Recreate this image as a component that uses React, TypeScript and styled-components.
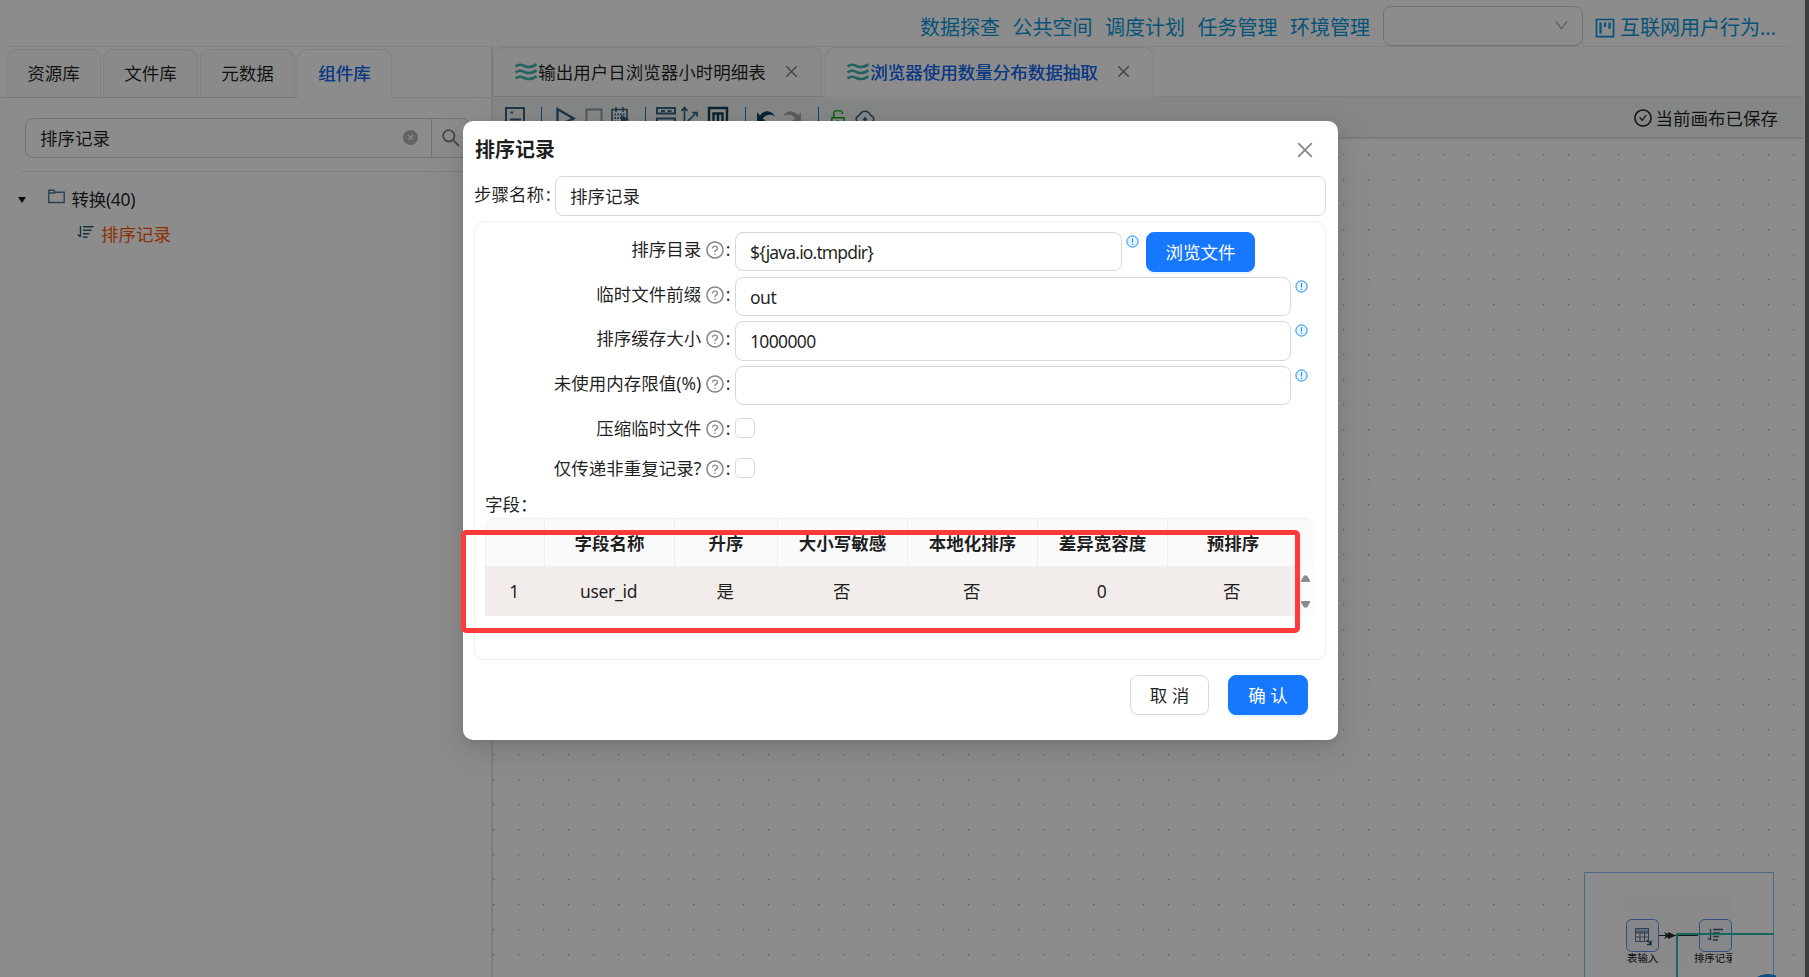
import React from "react";
import styled, { createGlobalStyle, css } from "styled-components";
import {
  AiFillCloseCircle,
  AiOutlineCheckCircle,
  AiOutlineClose,
  AiOutlineCloudUpload,
  AiOutlineDown,
  AiOutlineProject,
  AiOutlineQuestionCircle,
  AiOutlineSearch,
  AiOutlineUnlock,
} from "react-icons/ai";

const GlobalStyle = createGlobalStyle`
  *, *::before, *::after { box-sizing: border-box; }
  body {
    margin: 0;
    overflow: hidden;
    background: #3c3c3c;
    color: rgba(0, 0, 0, 0.88);
    font-family: "Noto Sans", "Noto Sans CJK SC", sans-serif;
    font-size: 17.5px;
    line-height: 26px;
  }
  svg { display: block; flex: none; }
`;

const Window = styled.div`
  position: relative;
  width: 1805px;
  height: 977px;
  overflow: hidden;
  background: #fff;
  display: flex;
  flex-direction: column;
`;

/* ---------- header ---------- */
const Header = styled.header`
  height: 47px;
  flex: none;
  margin: 0 15px 0 5px;
  padding-right: 14px;
  border-bottom: 1px solid #ededed;
  display: flex;
  justify-content: flex-end;
  align-items: center;
  color: #0a98dd;
  font-size: 20px;
`;
const Nav = styled.nav`
  display: flex;
  gap: 12.5px;
  margin: 9px 13px 0 0;
  white-space: nowrap;
`;
const ProjectSelect = styled.div`
  width: 200px;
  height: 40px;
  margin-top: 5px;
  border: 1px solid #d0d0d0;
  border-radius: 8px;
  display: flex;
  align-items: center;
  justify-content: flex-end;
  padding-right: 12px;
  color: #b0b0b0;
`;
const ProjectLink = styled.div`
  display: flex;
  align-items: center;
  gap: 3px;
  width: 183px;
  margin: 9px 0 0 10px;
  white-space: nowrap;
`;

/* ---------- body ---------- */
const Body = styled.div`
  flex: 1;
  display: flex;
  min-height: 0;
`;
const Sidebar = styled.aside`
  width: 493px;
  flex: none;
  border-right: 2px solid #e6e6e6;
`;
const TabStrip = styled.div<{ $height: number; $top: number; $left: number; $gap: number }>`
  display: flex;
  gap: ${(p) => p.$gap}px;
  height: ${(p) => p.$height}px;
  padding: ${(p) => p.$top}px 0 0 ${(p) => p.$left}px;
  box-shadow: inset 0 -1px 0 #e6e6e6;
`;
const Tab = styled.div<{ $active?: boolean; $width: number }>`
  width: ${(p) => p.$width}px;
  height: 100%;
  display: flex;
  align-items: center;
  justify-content: center;
  border: 1px solid #ebebeb;
  border-bottom-color: #d6d6d6;
  border-radius: 10px 10px 0 0;
  background: #fbfbfb;
  padding-bottom: 1px;
  white-space: nowrap;
  ${(p) =>
    p.$active &&
    css`
      background: #fff;
      border-bottom-color: #fff;
      color: #1668f0;
      text-shadow: 0 0 0.25px currentcolor;
    `}
`;
const TabLabel = styled.span`
  margin: 0 17px 0 1px;
`;
const SearchBox = styled.div`
  display: flex;
  margin: 20px 0 0 25px;
  height: 40px;
  width: 445px;
  border: 1px solid #d0d0d0;
  border-radius: 8px;
`;
const SearchField = styled.div`
  width: 406px;
  border-right: 1px solid #d0d0d0;
  display: flex;
  align-items: center;
  justify-content: space-between;
  padding: 0 12px 1px 14px;
  svg { color: #b4b4b4; }
`;
const SearchButton = styled.div`
  display: flex;
  align-items: center;
  padding-left: 8px;
  color: #777;
`;
const Tree = styled.div`
  margin: 13px 0 0 19px;
  border-top: 1px solid #e9e9e9;
  padding-top: 12px;
`;
const TreeRow = styled.div<{ $indent?: boolean }>`
  display: flex;
  align-items: center;
  height: ${(p) => (p.$indent ? 40 : 30)}px;
  padding-left: ${(p) => (p.$indent ? 58 : 0)}px;
  color: ${(p) => (p.$indent ? "#ff5a05" : "inherit")};
  letter-spacing: ${(p) => (p.$indent ? 0 : "-0.3px")};
`;
const TreeIcon = styled.span<{ $raise: number }>`
  margin: 0 7px ${(p) => p.$raise}px 0;
`;
const Caret = styled.i`
  border: 4.5px solid transparent;
  border-top: 6px solid #111;
  border-bottom: 0;
  margin: 1px 22px 0 -1.5px;
`;

const Main = styled.main`
  flex: 1;
  min-width: 0;
  display: flex;
  flex-direction: column;
  padding-right: 2px;
`;
const Toolbar = styled.div`
  height: 42px;
  flex: none;
  display: flex;
  align-items: center;
  justify-content: space-between;
  padding: 0 25px 0 0;
  background: #f1f6f4;
  border-bottom: 2px solid #dfe4e2;
`;
const SavedState = styled.div`
  display: flex;
  align-items: center;
  gap: 3px;
  white-space: nowrap;
  margin-top: 1px;
`;
const Canvas = styled.div`
  flex: 1;
  display: flex;
  justify-content: flex-end;
  align-items: flex-end;
  padding-right: 29px;
  margin-right: -2px;
  background-image: radial-gradient(circle at 0.6px 0.6px, #a8a8a8 0.7px, transparent 1px);
  background-size: 25px 25px;
  background-position: 0 15px;
`;

/* ---------- modal ---------- */
const Mask = styled.div`
  position: absolute;
  inset: 0;
  background: rgba(0, 0, 0, 0.45);
  padding: 121px 0 0 463px;
`;
const Dialog = styled.section`
  position: relative;
  width: 875px;
  height: 619px;
  border-radius: 10px;
  background: #fff;
  padding: 0 12px 0 11px;
  box-shadow: 0 8px 20px rgba(0, 0, 0, 0.08), 0 4px 8px -5px rgba(0, 0, 0, 0.12),
    0 11px 35px 10px rgba(0, 0, 0, 0.05);
`;
const DialogHead = styled.div`
  height: 55px;
  padding: 3px 10px 0 1px;
  display: flex;
  align-items: center;
  justify-content: space-between;
  font-size: 20px;
  font-weight: 700;
  svg { color: #858585; }
`;
const NameRow = styled.label`
  display: flex;
  align-items: center;
  justify-content: space-between;
  height: 40px;
`;
const NameLabel = styled.span`
  margin-top: -5px;
  white-space: nowrap;
`;
const Colon = styled.span`
  margin-left: 2px;
`;
const Field = styled.div<{ $width: number; $height?: number; $tracking?: number }>`
  width: ${(p) => p.$width}px;
  height: ${(p) => p.$height ?? 39}px;
  border: 1px solid #d9d9d9;
  border-radius: 8px;
  padding: 0 14px;
  display: flex;
  align-items: center;
  letter-spacing: ${(p) => p.$tracking ?? 0}px;
`;
const Panel = styled.div`
  height: 439px;
  margin-top: 5px;
  border: 1px solid #f0f0f0;
  border-radius: 10px;
  padding: 10px 10px 0;
`;
const FormRow = styled.div<{ $height: number }>`
  height: ${(p) => p.$height}px;
  display: flex;
  align-items: flex-start;
`;
const FormLabel = styled.div`
  width: 250px;
  padding: 4px 4.5px 0 0;
  display: flex;
  justify-content: flex-end;
  align-items: center;
  white-space: nowrap;
  flex: none;
  svg { color: #858585; margin: 1px 0.5px 0 4px; }
`;
const Tip = styled.span`
  margin: 3px 0 0 3.5px;
`;
const Checkbox = styled.span`
  width: 20px;
  height: 20px;
  margin-top: 7px;
  border: 1px solid #d9d9d9;
  border-radius: 5px;
`;
const Button = styled.button<{ $primary?: boolean; $width: number }>`
  width: ${(p) => p.$width}px;
  height: 40px;
  padding: 0 0 1px;
  border-radius: 8px;
  font: inherit;
  white-space: nowrap;
  color: ${(p) => (p.$primary ? "#fff" : "inherit")};
  background: ${(p) => (p.$primary ? "#1677ff" : "#fff")};
  border: 1px solid ${(p) => (p.$primary ? "#1677ff" : "#d9d9d9")};
  box-shadow: 0 2px 0 ${(p) => (p.$primary ? "rgba(5,145,255,.1)" : "rgba(0,0,0,.02)")};
`;
const BrowseButton = styled(Button)`
  margin-left: 7.5px;
`;
const TableTitle = styled.div`
  height: 27px;
  margin-top: -3px;
`;
const TableGrid = styled.div`
  display: flex;
  flex-direction: column;
  width: 830px;
`;
const HeadRow = styled.div`
  display: grid;
  grid-template-columns: 59px 130px 103px 130px 130px 130px 130px 1fr;
  height: 49px;
  border: 1px solid #f0f0f0;
  border-right: 0;
  border-radius: 10px 10px 0 0;
  background: #fafafa;
  font-weight: 700;
  margin-bottom: -1px;
`;
const HeadCell = styled.div<{ $line: boolean }>`
  display: flex;
  align-items: center;
  justify-content: center;
  padding-top: 1px;
  border-right: ${(p) => (p.$line ? "1px solid #eeeeee" : "0")};
`;
const DataLine = styled.div`
  display: flex;
  height: 50px;
`;
const DataRow = styled.div`
  width: 814px;
  display: grid;
  grid-template-columns: 59px 130px 103px 130px 130px 130px 130px;
  background: #f2eceb;
`;
const DataCell = styled.div`
  display: flex;
  align-items: center;
  justify-content: center;
  border-right: 1px solid #efefef;
  letter-spacing: -0.3px;
`;
const Scroller = styled.div`
  width: 16px;
  background: #fcfcfc;
  display: flex;
  flex-direction: column;
  justify-content: space-between;
  padding: 9px 0 8px 2px;
`;
const Footer = styled.div`
  display: flex;
  justify-content: flex-end;
  gap: 19px;
  padding: 15px 18px 0 0;
`;
const Highlight = styled.div`
  position: absolute;
  left: -2px;
  top: 408.5px;
  width: 839px;
  height: 103px;
  border: 5px solid #ff3a3a;
  border-radius: 5px;
`;

/* ---------- drawings ---------- */
const Waves = () => (
  <svg width="22" height="18" viewBox="0 0 22 18" fill="none" stroke="#3fb5b0" strokeWidth="2.6">
    {[3.4, 9.4, 15.4].map((y) => (
      <path key={y} d={`M.5 ${y}c4-2.800 6.500-1.500 9.500-.2s7 1.200 11.500-1.800`} />
    ))}
  </svg>
);

const SortGlyph = () => (
  <svg width="17" height="14" viewBox="0 0 17 14" fill="none" stroke="#315a78" strokeWidth="1.4">
    <path d="M3.500 1v11M3.500 12L.8 9.500M6 1.700h10.500M6 5.300h8.500M6 8.800h6.500M6 12.300h4.500" />
  </svg>
);

const FolderGlyph = () => (
  <svg width="17" height="15" viewBox="0 0 17 15" fill="none" stroke="#4a7696" strokeWidth="1.4">
    <path d="M.8 13.500V1.200h5l1.200 2h9.200v10.300zM.8 4h6.500" />
  </svg>
);

const InfoGlyph = () => (
  <svg width="13" height="13" viewBox="0 0 13 13" fill="none" stroke="#1688f5">
    <circle cx="6.500" cy="6.500" r="5.600" fill="#e6f4ff" />
    <path d="M6.500 3.200v4.200M6.500 8.700v1.200" />
  </svg>
);

const ToolIcons = () => (
  <svg width="400" height="40" viewBox="493 98 400 40" fill="none" stroke="#386384" strokeWidth="2">
    <path d="M506 109h18v18h-18zM510 120.500h11M510.500 113.500h2.500" />
    <path d="M557.500 110v17l16-7.500z" strokeWidth="2.400" />
    <path d="M586.500 110.500h15v15h-15z" stroke="#8d9fb0" />
    <path d="M612 110.500h15v15h-15zM616 108v5M623 108v5" strokeWidth="1.600" />
    <path d="M614.500 115.500h10M614.500 119h7M614.500 122.500h5" strokeDasharray="1.500 1.300" />
    <path d="M621 116l8 4-8 4z" fill="#386384" stroke="none" />
    <path d="M657 109h18v5.500h-18zM657 119.500h18v6h-18zM661 112h4M667.500 112h4" />
    <path d="M684.500 109v16h14M686 124l10-10M681.500 112l3-3.500 3 3.500M692 113.500h5v4" strokeWidth="1.700" />
    <path d="M709 109h18v17h-18z" stroke="#1c3f5a" strokeWidth="2.400" />
    <path d="M713.500 124v-9.500h9v9.500M718 114.500v10" stroke="#1c3f5a" strokeWidth="2.400" />
    <path d="M757 113.500v9h9l-3.200-3.200c4-4 8.200-4.500 12.200-1.500-2.500-6-9.500-8-15-1.500z" fill="#17405f" stroke="none" />
    <path d="M801 113.500v9h-9l3.200-3.200c-4-4-8.200-4.500-12.200-1.500 2.500-6 9.500-8 15-1.500z" fill="#a9a9a9" stroke="none" />
    <path d="M541.500 108v20M645.500 108v20M745.500 108v20M818.500 108v20" stroke="#1484d6" strokeWidth="1" />
    <AiOutlineUnlock x="828" y="109" width="20" height="20" size={20} color="#10a010" fill="#10a010" stroke="none" />
    <AiOutlineCloudUpload x="854" y="108" width="22" height="22" size={22} color="#386384" fill="#386384" stroke="none" />
  </svg>
);

const MiniMap = () => (
  <svg width="192" height="105" viewBox="1584 872 192 105" fill="none">
    <path d="M1584.500 978V872.500h189V978" fill="#fff" stroke="#84bdf2" />
    <path d="M1626 897h106v76h-106z" fill="#fcfcfc" stroke="#f8f8f8" />
    <clipPath id="thumb">
      <path d="M1626 897h106v76h-106z" />
    </clipPath>
    <g clipPath="url(#thumb)">
      <rect x="1626.500" y="919.500" width="32" height="32" rx="5" fill="#f4f6fb" stroke="#5f8de8" />
      <rect x="1699.500" y="919.500" width="32" height="32" rx="5" fill="#f4f6fb" stroke="#5f8de8" />
      <path d="M1635.500 928.500h13v13h-13zM1635.500 933h13M1635.500 937h13M1640 932v9M1644.500 932v9" stroke="#5c7488" />
      <path d="M1635.500 928.500h13v3.500h-13z" fill="#a4cbe0" stroke="#5c7488" />
      <path d="M1647 940l4 4M1651 940.500v4h-4" stroke="#315a78" strokeWidth="1.500" />
      <path d="M1710.500 929v11M1710.500 940l-2.500-2M1713 929.500h10M1713 933h7M1713 936.500h6M1713 940h5" stroke="#46627c" strokeWidth="1.300" />
      <text x="1627" y="962" fill="#111" fontSize="10.400" fontFamily="Noto Sans CJK SC">表输入</text>
      <text x="1694" y="962" fill="#111" fontSize="10.400" fontFamily="Noto Sans CJK SC">排序记录</text>
    </g>
    <path d="M1659 935.500h39" stroke="#2c2c2c" />
    <path d="M1664 932l4 2 0-2 8 3.500-8 3.500v-2l-4 2 2-3.500z" fill="#2c2c2c" />
    <path d="M1677 977v-43h96.500" stroke="#27bda9" strokeWidth="2" />
    <circle cx="1768" cy="995" r="21" fill="#168cf0" />
  </svg>
);

const ScrollArrow = ({ down }: { down?: boolean }) => (
  <svg width="9" height="7" viewBox="0 0 9 7" fill="#8b8b8b">
    <path d={down ? "M0 0h9v1.500L6 6.500H3L0 1.500z" : "M0 7h9V5.500L6 .5H3L0 5.500z"} />
  </svg>
);

/* ---------- data ---------- */
const navItems = ["数据探查", "公共空间", "调度计划", "任务管理", "环境管理"];
const sideTabs = ["资源库", "文件库", "元数据", "组件库"];
const fileTabs = ["输出用户日浏览器小时明细表", "浏览器使用数量分布数据抽取"];
const formRows = [
  { label: "排序目录", value: "${java.io.tmpdir}", tracking: -0.85, width: 387, height: 39, row: 45, browse: true },
  { label: "临时文件前缀", value: "out", tracking: -0.5, width: 556, height: 39, row: 44 },
  { label: "排序缓存大小", value: "1000000", tracking: -0.65, width: 556, height: 40, row: 45 },
  { label: "未使用内存限值(%)", value: "", width: 556, height: 39, row: 45 },
];
const checkRows = [
  { label: "压缩临时文件", row: 40 },
  { label: "仅传递非重复记录?", row: 43 },
];
const headers = ["", "字段名称", "升序", "大小写敏感", "本地化排序", "差异宽容度", "预排序", ""];
const cells = ["1", "user_id", "是", "否", "否", "0", "否"];

const HelpLabel = ({ text }: { text: string }) => (
  <FormLabel>
    {text}
    <AiOutlineQuestionCircle size={20} />:
  </FormLabel>
);

export default function App() {
  return (
    <Window>
      <GlobalStyle />
      <Header>
        <Nav>
          {navItems.map((item) => (
            <span key={item}>{item}</span>
          ))}
        </Nav>
        <ProjectSelect>
          <AiOutlineDown size={17} />
        </ProjectSelect>
        <ProjectLink>
          <AiOutlineProject size={24} />
          互联网用户行为...
        </ProjectLink>
      </Header>

      <Body>
        <Sidebar>
          <TabStrip $height={51} $top={2} $left={6} $gap={2}>
            {sideTabs.map((name, i) => (
              <Tab key={name} $width={95} $active={i === 3}>
                {name}
              </Tab>
            ))}
          </TabStrip>
          <SearchBox>
            <SearchField>
              排序记录
              <AiFillCloseCircle size={17} />
            </SearchField>
            <SearchButton>
              <AiOutlineSearch size={22} />
            </SearchButton>
          </SearchBox>
          <Tree>
            <TreeRow>
              <Caret />
              <TreeIcon $raise={6}>
                <FolderGlyph />
              </TreeIcon>
              转换(40)
            </TreeRow>
            <TreeRow $indent>
              <TreeIcon $raise={5}>
                <SortGlyph />
              </TreeIcon>
              排序记录
            </TreeRow>
          </Tree>
        </Sidebar>

        <Main>
          <TabStrip $height={50} $top={0} $left={0} $gap={3}>
            {fileTabs.map((name, i) => (
              <Tab key={name} $width={329} $active={i === 1}>
                <Waves />
                <TabLabel>{name}</TabLabel>
                <AiOutlineClose size={17} color="#777" />
              </Tab>
            ))}
          </TabStrip>
          <Toolbar>
            <ToolIcons />
            <SavedState>
              <AiOutlineCheckCircle size={20} />
              当前画布已保存
            </SavedState>
          </Toolbar>
          <Canvas>
            <MiniMap />
          </Canvas>
        </Main>
      </Body>

      <Mask>
        <Dialog>
          <DialogHead>
            排序记录
            <AiOutlineClose size={22} />
          </DialogHead>
          <NameRow>
            <NameLabel>
              步骤名称<Colon>:</Colon>
            </NameLabel>
            <Field $width={771} $height={40}>
              排序记录
            </Field>
          </NameRow>
          <Panel>
            {formRows.map((r) => (
              <FormRow key={r.label} $height={r.row}>
                <HelpLabel text={r.label} />
                <Field $width={r.width} $height={r.height} $tracking={r.tracking}>
                  {r.value}
                </Field>
                <Tip>
                  <InfoGlyph />
                </Tip>
                {r.browse && (
                  <BrowseButton $primary $width={109}>
                    浏览文件
                  </BrowseButton>
                )}
              </FormRow>
            ))}
            {checkRows.map((r) => (
              <FormRow key={r.label} $height={r.row}>
                <HelpLabel text={r.label} />
                <Checkbox />
              </FormRow>
            ))}
            <TableTitle>字段：</TableTitle>
            <TableGrid>
              <HeadRow>
                {headers.map((h, i) => (
                  <HeadCell key={i} $line={i < 6}>
                    {h}
                  </HeadCell>
                ))}
              </HeadRow>
              <DataLine>
                <DataRow>
                  {cells.map((c, i) => (
                    <DataCell key={i}>{c}</DataCell>
                  ))}
                </DataRow>
                <Scroller>
                  <ScrollArrow />
                  <ScrollArrow down />
                </Scroller>
              </DataLine>
            </TableGrid>
          </Panel>
          <Footer>
            <Button $width={79}>取 消</Button>
            <Button $primary $width={80}>
              确 认
            </Button>
          </Footer>
          <Highlight />
        </Dialog>
      </Mask>
    </Window>
  );
}
